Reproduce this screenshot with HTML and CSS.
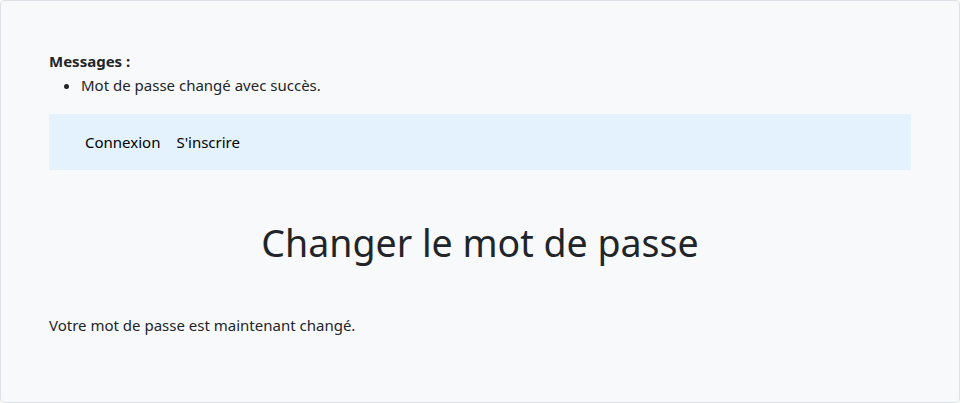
FILE: index.html
```html
<!DOCTYPE html>
<html lang="fr">
<head>
<meta charset="utf-8">
<title>Changer le mot de passe</title>
<link rel="stylesheet" href="styles.css">
</head>
<body>
<div class="page">
  <div class="messages">
    <strong class="messages-title">Messages :</strong>
    <ul class="messages-list">
      <li>Mot de passe changé avec succès.</li>
    </ul>
  </div>
  <nav class="navbar">
    <a class="nav-link" href="#">Connexion</a>
    <a class="nav-link" href="#">S'inscrire</a>
  </nav>
  <h1 class="title">Changer le mot de passe</h1>
  <p class="text">Votre mot de passe est maintenant changé.</p>
</div>
</body>
</html>
```
FILE: styles.css
```css
* { box-sizing: border-box; }
html, body { margin: 0; padding: 0; }
body {
  font-family: "Noto Sans", "Open Sans", sans-serif;
  font-size: 15px;
  line-height: 24px;
  color: #212529;
  background: #ffffff;
}
.page {
  width: 960px;
  height: 403px;
  border: 1px solid #dee2e6;
  border-radius: 4px;
  background: #f8f9fa;
  padding: 48px;
}
.messages-title {
  display: block;
  font-weight: 700;
}
.messages-list {
  margin: 0 0 17px 0;
  padding-left: 32px;
}
.navbar {
  display: flex;
  height: 56px;
  align-items: center;
  background: #e3f2fd;
  padding: 0 28px;
}
.nav-link {
  color: #000000;
  text-decoration: none;
  padding: 8px;
}
.title {
  margin: 49px 0 46px 0;
  font-size: 37.5px;
  font-weight: 400;
  line-height: 48px;
  text-align: center;
}
.text { margin: 0; }
```
